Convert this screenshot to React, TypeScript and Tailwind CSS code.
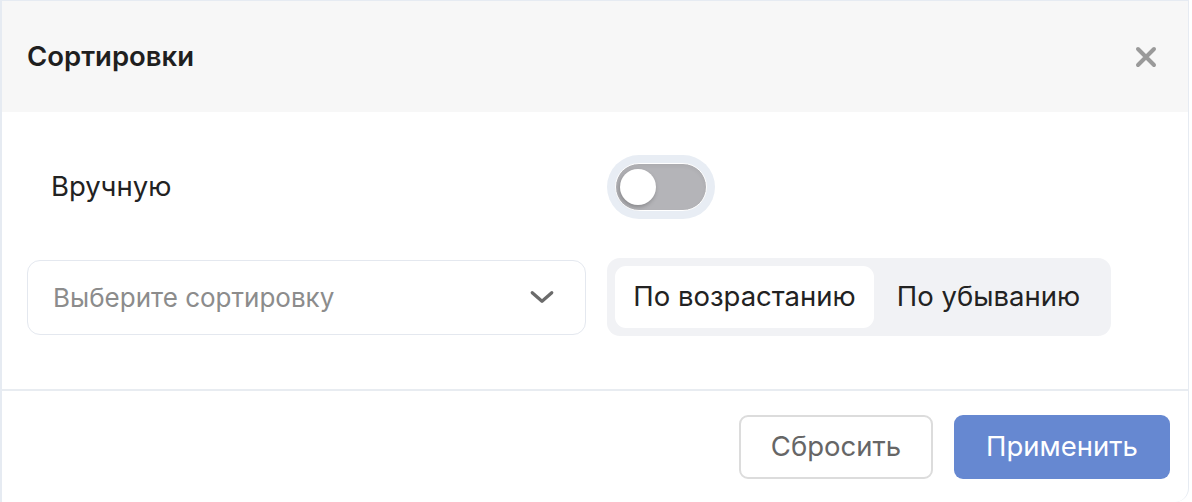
import React, { useState } from 'react';

const App: React.FC = () => {
  const [manual, setManual] = useState(false);
  const [order, setOrder] = useState<'asc' | 'desc'>('asc');

  return (
    <div className="w-[1192px] h-[502px] bg-white" style={{ fontFamily: 'Inter, "Noto Sans", sans-serif' }}>
      <div className="w-[1189px] h-[502px] flex flex-col border-l-2 border-t border-r border-[#e6ebf2] rounded-br-[14px] overflow-hidden">
        {/* header */}
        <div className="h-[111px] shrink-0 bg-[#f7f7f7] flex items-center justify-between pl-[25px] pr-[30px]">
          <h2 className="text-[27.5px] font-semibold text-[#1f1f1f]">Сортировки</h2>
          <button className="text-[#9a9a9a]">
            <svg width="24" height="24" viewBox="0 0 24 24" fill="none" stroke="currentColor" strokeWidth="4" strokeLinecap="round">
              <path d="M4 4 L20 20 M20 4 L4 20" />
            </svg>
          </button>
        </div>

        {/* body */}
        <div className="flex-1 flex flex-col px-[25px] pt-[43px]">
          <div className="flex items-center h-[64px]">
            <span className="w-[580px] pl-[24px] text-[27.5px] text-[#222]">Вручную</span>
            <button
              onClick={() => setManual(!manual)}
              className="w-[108px] h-[64px] rounded-full bg-[#e8edf4] p-[8px]"
            >
              <span className="flex h-full w-full items-center rounded-full bg-[#b4b4b8] border border-white px-[4px] shadow-inner">
                <span className="w-[36px] h-[36px] rounded-full bg-white shadow-[-1px_2px_4px_rgba(0,0,0,0.25)]" />
              </span>
            </button>
          </div>

          <div className="flex items-center gap-[21px] mt-[39px]">
            <div className="w-[559px] h-[75px] rounded-[13px] border border-[#e4e8ef] flex items-center justify-between pl-[25px] pr-[30px]">
              <span className="text-[26px] text-[#8c8c8c]">Выберите сортировку</span>
              <svg width="26" height="26" viewBox="0 0 24 24" fill="none" stroke="#6b6b6b" strokeWidth="3" strokeLinecap="round" strokeLinejoin="round">
                <path d="M3 8 L12 16 L21 8" />
              </svg>
            </div>
            <div className="w-[504px] h-[78px] rounded-[13px] bg-[#f1f2f5] p-[8px] flex">
              <button
                onClick={() => setOrder('asc')}
                className={`w-[259px] h-full rounded-[11px] text-[27.5px] text-[#222] ${order === 'asc' ? 'bg-white' : ''}`}
              >
                По возрастанию
              </button>
              <button
                onClick={() => setOrder('desc')}
                className={`flex-1 h-full rounded-[11px] text-[27.5px] text-[#222] ${order === 'desc' ? 'bg-white' : ''}`}
              >
                По убыванию
              </button>
            </div>
          </div>
        </div>

        {/* footer */}
        <div className="h-[113px] shrink-0 border-t-2 border-[#e8ecf1] flex items-start justify-end gap-[21px] pt-[24px] pr-[18px]">
          <button className="w-[194px] h-[64px] rounded-[9px] border-2 border-[#dcdcdc] bg-white text-[27.5px] text-[#666]">
            Сбросить
          </button>
          <button className="w-[216px] h-[64px] rounded-[9px] bg-[#6688d1] text-[27.5px] text-white">
            Применить
          </button>
        </div>
      </div>
    </div>
  );
};

export default App;
